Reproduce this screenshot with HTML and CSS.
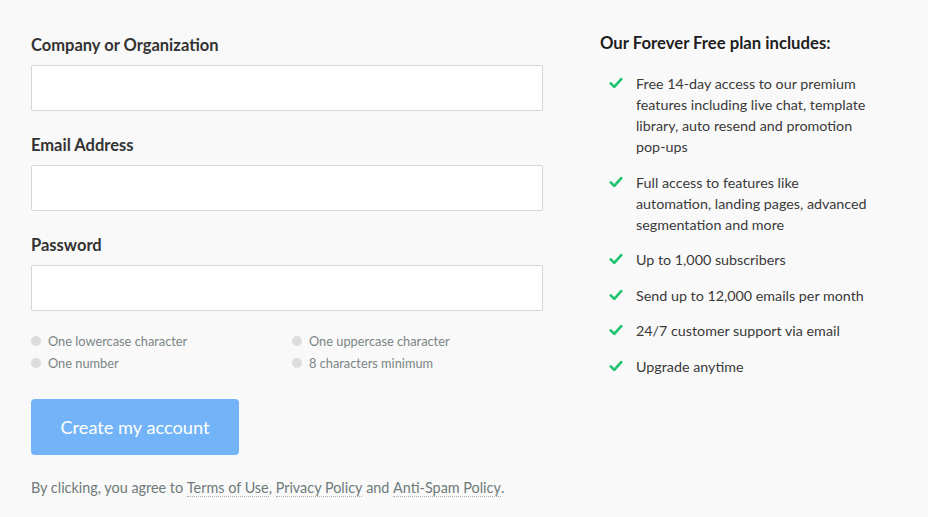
FILE: index.html
```html
<!DOCTYPE html>
<html lang="en">
<head>
  <meta charset="UTF-8">
  <meta name="viewport" content="width=device-width, initial-scale=1.0">
  <title>Sign up</title>
  <link rel="stylesheet" href="styles.css">
</head>
<body>
  <div class="page">
    <form class="signup">
      <div class="field">
        <label>Company or Organization</label>
        <input type="text">
      </div>
      <div class="field">
        <label>Email Address</label>
        <input type="email">
      </div>
      <div class="field">
        <label>Password</label>
        <input type="password">
      </div>
      <ul class="rules">
        <li>One lowercase character</li>
        <li>One uppercase character</li>
        <li>One number</li>
        <li>8 characters minimum</li>
      </ul>
      <button type="button" class="submit">Create my account</button>
      <p class="terms">By clicking, you agree to <a href="#">Terms of Use</a>, <a href="#">Privacy Policy</a> and <a href="#">Anti-Spam Policy</a>.</p>
    </form>
    <aside class="plan">
      <h2>Our Forever Free plan includes:</h2>
      <ul>
        <li><svg viewBox="0 0 16 16"><path d="M2 8.5l4 4 8-9"/></svg><span>Free 14-day access to our premium features including live chat, template library, auto resend and promotion pop-ups</span></li>
        <li><svg viewBox="0 0 16 16"><path d="M2 8.5l4 4 8-9"/></svg><span>Full access to features like automation, landing pages, advanced segmentation and more</span></li>
        <li><svg viewBox="0 0 16 16"><path d="M2 8.5l4 4 8-9"/></svg><span>Up to 1,000 subscribers</span></li>
        <li><svg viewBox="0 0 16 16"><path d="M2 8.5l4 4 8-9"/></svg><span>Send up to 12,000 emails per month</span></li>
        <li><svg viewBox="0 0 16 16"><path d="M2 8.5l4 4 8-9"/></svg><span>24/7 customer support via email</span></li>
        <li><svg viewBox="0 0 16 16"><path d="M2 8.5l4 4 8-9"/></svg><span>Upgrade anytime</span></li>
      </ul>
    </aside>
  </div>
</body>
</html>
```

FILE: styles.css
```css
*, *::before, *::after {
  padding: 0;
  margin: 0;
  box-sizing: border-box;
}

body {
  background: #f9f9f9;
  font-family: Lato, "Noto Sans", sans-serif;
  color: #333;
}

.page {
  display: flex;
  gap: 57px;
  padding: 35px 0 0 31px;
}

.signup {
  width: 512px;
}

.field {
  margin-bottom: 24px;
}

.field label {
  display: block;
  font-size: 16.5px;
  font-weight: 700;
  line-height: 20px;
  margin-bottom: 10px;
  color: #333;
}

.field input {
  display: block;
  width: 100%;
  height: 46px;
  border: 1px solid #d6d6db;
  border-radius: 2px;
  background: #fff;
}

.field:nth-child(3) {
  margin-bottom: 20px;
}

.rules {
  list-style: none;
  display: grid;
  grid-template-columns: 261px 1fr;
  row-gap: 2px;
  font-size: 12.8px;
  line-height: 20px;
  color: #7b8585;
}

.rules li {
  display: flex;
  align-items: center;
  gap: 7px;
}

.rules li::before {
  content: "";
  width: 10px;
  height: 10px;
  border-radius: 50%;
  background: #dcdcdc;
}

.submit {
  margin-top: 26px;
  width: 208px;
  height: 56px;
  border: 0;
  border-radius: 4px;
  background: #72b4f7;
  color: #fff;
  font-family: inherit;
  font-size: 18.2px;
}

.terms {
  margin-top: 24px;
  font-size: 14.4px;
  line-height: 18px;
  color: #6f7b7b;
}

.terms a {
  display: inline-block;
  color: inherit;
  text-decoration: none;
  line-height: 16px;
  border-bottom: 1px dotted #a9b1b1;
}

.plan {
  margin-top: -1px;
}

.plan h2 {
  font-size: 16.7px;
  font-weight: 700;
  line-height: 18px;
  color: #1e1e1e;
  margin-bottom: 21px;
}

.plan ul {
  list-style: none;
  width: 275px;
}

.plan li {
  display: flex;
  align-items: flex-start;
  gap: 13px;
  padding-left: 9px;
  font-size: 14.3px;
  line-height: 21px;
  color: #3a3a3a;
  margin-bottom: 14.5px;
}

.plan svg {
  flex: none;
  width: 14px;
  height: 14px;
  margin-top: 3px;
  fill: none;
  stroke: #1ec46e;
  stroke-width: 3;
  stroke-linecap: round;
  stroke-linejoin: round;
}
```
